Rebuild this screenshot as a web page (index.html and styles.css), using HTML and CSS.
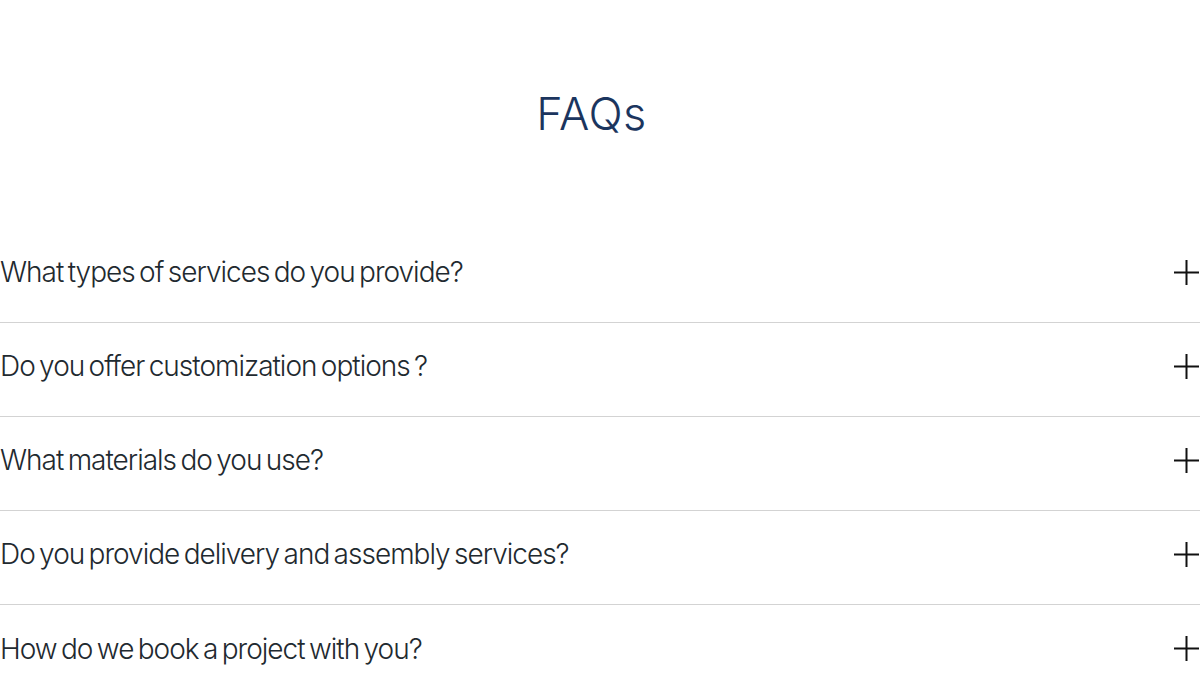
FILE: index.html
```html
<!DOCTYPE html>
<html lang="en">
<head>
<meta charset="utf-8">
<title>FAQs</title>
<link rel="stylesheet" href="styles.css">
</head>
<body>
<section class="faq">
  <h1 class="faq-title">FAQs</h1>
  <ul class="faq-list">
    <li class="faq-item"><span class="faq-q">What types of services do you provide?</span><svg class="faq-icon" viewBox="0 0 25 25"><path d="M12.5 0V25M0 12.5H25"/></svg></li>
    <li class="faq-item"><span class="faq-q">Do you offer customization options ?</span><svg class="faq-icon" viewBox="0 0 25 25"><path d="M12.5 0V25M0 12.5H25"/></svg></li>
    <li class="faq-item"><span class="faq-q">What materials do you use?</span><svg class="faq-icon" viewBox="0 0 25 25"><path d="M12.5 0V25M0 12.5H25"/></svg></li>
    <li class="faq-item"><span class="faq-q">Do you provide delivery and assembly services?</span><svg class="faq-icon" viewBox="0 0 25 25"><path d="M12.5 0V25M0 12.5H25"/></svg></li>
    <li class="faq-item"><span class="faq-q">How do we book a project with you?</span><svg class="faq-icon" viewBox="0 0 25 25"><path d="M12.5 0V25M0 12.5H25"/></svg></li>
  </ul>
</section>
</body>
</html>
```

FILE: styles.css
```css
* { box-sizing: border-box; }
html, body { margin: 0; padding: 0; background: #fff; }
body { font-family: Inter, "Liberation Sans", sans-serif; }
.faq { padding-top: 86px; }
.faq-title {
  margin: 0;
  padding-right: 17px;
  text-align: center;
  font-weight: 300;
  font-size: 45px;
  line-height: 56px;
  letter-spacing: 0.4px;
  color: #1b355e;
}
.faq-list { list-style: none; margin: 87px 0 0; padding: 0; }
.faq-item {
  display: flex;
  align-items: center;
  justify-content: space-between;
  height: 94px;
  padding-bottom: 7px;
  border-bottom: 1px solid #d3d3d3;
}
.faq-item:last-child { border-bottom: none; }
.faq-q {
  font-weight: 300;
  font-size: 28px;
  line-height: 36px;
  letter-spacing: -1px;
  word-spacing: -2.5px;
  color: #1f2a30;
}
.faq-icon {
  width: 25px;
  height: 25px;
  margin-right: 1px;
  stroke: #111;
  stroke-width: 2;
  fill: none;
}
```
